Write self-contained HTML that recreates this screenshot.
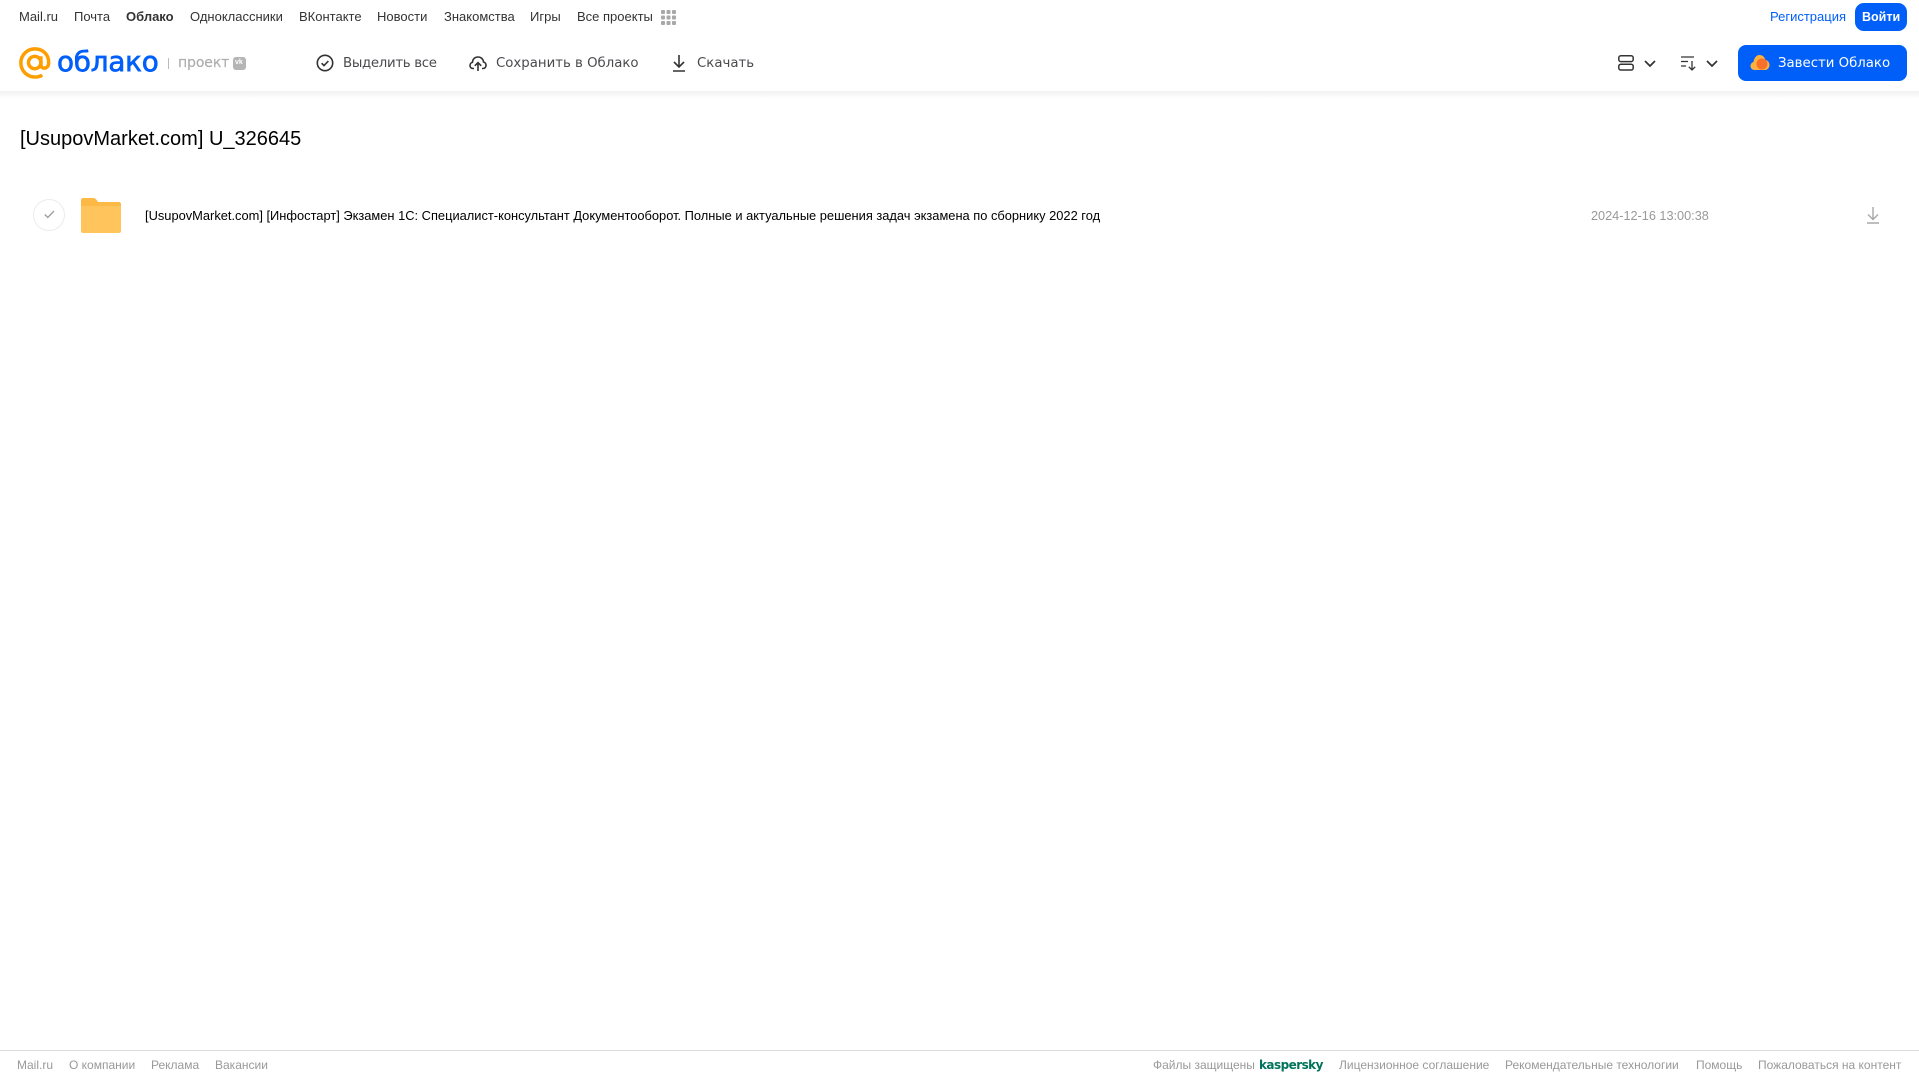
<!DOCTYPE html>
<html lang="ru"><head><meta charset="utf-8"><title>Облако</title>
<style>
html,body{margin:0;padding:0;background:#fff;width:1919px;height:1079px;overflow:hidden}
body{position:relative;font-family:"Liberation Sans",Arial,sans-serif}
.t{position:absolute;white-space:nowrap;line-height:20px}
.n{top:7px;font-size:13px;color:#333}
.b{top:54px;color:#4a4a4e;font-family:"DejaVu Sans",sans-serif;font-size:13.3px}
.f{top:1055px;font-size:12px;color:#999}
svg{position:absolute;overflow:visible}
#shadow{position:absolute;left:0;top:91px;width:1919px;height:8px;background:linear-gradient(#f2f2f3,#fff)}
</style></head><body>
<span class="t n" style="left:19px">Mail.ru</span>
<span class="t n" style="left:74px">Почта</span>
<span class="t n" style="left:126px;font-weight:bold">Облако</span>
<span class="t n" style="left:190px">Одноклассники</span>
<span class="t n" style="left:299px">ВКонтакте</span>
<span class="t n" style="left:377px">Новости</span>
<span class="t n" style="left:444px">Знакомства</span>
<span class="t n" style="left:530px">Игры</span>
<span class="t n" style="left:577px">Все проекты</span>
<svg style="left:661px;top:10px" width="15" height="15" fill="#a8a8a8"><rect width="4" height="4" rx="1"/><rect x="5.5" width="4" height="4" rx="1"/><rect x="11" width="4" height="4" rx="1"/><rect y="5.5" width="4" height="4" rx="1"/><rect x="5.5" y="5.5" width="4" height="4" rx="1"/><rect x="11" y="5.5" width="4" height="4" rx="1"/><rect y="11" width="4" height="4" rx="1"/><rect x="5.5" y="11" width="4" height="4" rx="1"/><rect x="11" y="11" width="4" height="4" rx="1"/></svg>

<span class="t n" style="left:1770px;color:#005ff9">Регистрация</span>
<div style="position:absolute;left:1855px;top:3px;width:52px;height:28px;background:#005ff9;border-radius:9px"></div>
<span class="t n" style="left:1862px;color:#fff;font-weight:bold;font-size:12.5px">Войти</span>

<svg style="left:19px;top:47px" width="32" height="32" viewBox="0 0 33 33" fill="none" stroke="#ff9e00" stroke-width="3.6"><circle cx="16.2" cy="16" r="6.4"/><path d="M22.6 9.6v8.6c0 5 7.6 5 8-1.4C31 7.6 24.5 1.9 16.4 1.9 8.3 1.9 1.9 8.4 1.9 16.4s6.4 14.6 14.5 14.6c3 0 5.5-.7 7.6-2"/></svg>
<span class="t" style="left:57px;top:44px;line-height:36px;font-size:27.8px;color:#005ff9;font-family:'DejaVu Sans',sans-serif;-webkit-text-stroke:.7px #005ff9;letter-spacing:-.2px">облако</span>
<div style="position:absolute;left:168px;top:58px;width:1px;height:11px;background:#bbb"></div>
<span class="t" style="left:178px;top:53px;font-size:14px;color:#aeaeae;font-family:'DejaVu Sans',sans-serif;-webkit-text-stroke:.2px #aeaeae;letter-spacing:-.1px">проект</span>
<div style="position:absolute;left:233px;top:57px;width:13px;height:13px;background:#b5b5b5;border-radius:3px"></div>
<span class="t" style="left:235px;top:53px;font-size:7px;font-weight:bold;color:#fff">vk</span>

<svg style="left:316px;top:54px" width="18" height="18" viewBox="0 0 18 18" fill="none" stroke="#333" stroke-width="1.6"><circle cx="9" cy="9" r="7.7"/><path d="M5.6 9.2l2.4 2.4 4.4-4.6"/></svg>
<span class="t b" style="left:343px;letter-spacing:-.3px">Выделить все</span>
<svg style="left:469px;top:54px" width="18" height="18" viewBox="0 0 18 18" fill="none" stroke="#333" stroke-width="1.6"><path d="M5 14.5H4C2 14.5 1 13 1 11.5 1 10 2 8.7 3.4 8.4 3.6 5 6 3 9 3c3 0 5.200 2 5.500 5 1.500.3 2.500 1.700 2.500 3.300 0 1.700-1.200 3.200-3 3.200h-1"/><path d="M9 17V9M5.800 11.800L9 8.600l3.200 3.200"/></svg>
<span class="t b" style="left:496px">Сохранить в Облако</span>
<svg style="left:672px;top:54px" width="14" height="18" viewBox="0 0 14 18" fill="none" stroke="#333" stroke-width="1.600"><path d="M7 1v11.500M2 8l5 5 5-5M1 17h12"/></svg>
<span class="t b" style="left:697px">Скачать</span>

<svg style="left:1618px;top:55px" width="16" height="16" viewBox="0 0 16 16" fill="none" stroke="#333" stroke-width="1.500"><rect x=".8" y=".8" width="14.400" height="5.800" rx="2"/><rect x=".8" y="9.200" width="14.400" height="5.800" rx="2"/></svg>
<svg style="left:1644px;top:60px" width="12" height="7" fill="none" stroke="#333" stroke-width="1.700"><path d="M1 1l5 5 5-5"/></svg>
<svg style="left:1681px;top:56px" width="16" height="15" viewBox="0 0 16 15" fill="none" stroke="#333" stroke-width="1.300"><path d="M0 1h13M0 5.500h7M0 10h5M11 5v9M7.800 10.800l3.200 3.200 3.200-3.200"/></svg>
<svg style="left:1706px;top:60px" width="12" height="7" fill="none" stroke="#333" stroke-width="1.700"><path d="M1 1l5 5 5-5"/></svg>
<div style="position:absolute;left:1738px;top:45px;width:169px;height:36px;background:#005ff9;border-radius:8px"></div>
<svg style="left:1750px;top:54px" width="20" height="17" viewBox="0 0 20 17"><path d="M4.500 16C2 16 .5 14 .5 12c0-2 1.200-3.500 3-4C4 4 6.500 1 9.500 1c3 0 5 2 6 5 2.500.5 4 2.500 4 5 0 2.800-2 5-4.500 5z" fill="#ffb13d"/><circle cx="12" cy="10" r="5.500" fill="#f9702a"/></svg>
<span class="t b" style="left:1778px;color:#fff">Завести Облако</span>
<div id="shadow"></div>

<span class="t" style="left:20px;top:126px;line-height:26px;font-size:20px;color:#000">[UsupovMarket.com] U_326645</span>

<div style="position:absolute;left:33px;top:199px;width:30px;height:30px;border:1px solid #ececec;border-radius:50%"></div>
<svg style="left:44px;top:210px" width="11" height="9" fill="none" stroke="#9a9a9a" stroke-width="1.300"><path d="M.8 4.500l3 3L10 1"/></svg>
<svg style="left:81px;top:198px" width="40" height="35" viewBox="0 0 40 35"><path d="M2 0h10c2 0 3 1 4 2.500L17 4h21c1 0 2 1 2 2v7H0V2C0 1 1 0 2 0z" fill="#fdb945"/><path d="M0 8h40v25c0 1-1 2-2 2H2c-1 0-2-1-2-2z" fill="#ffc55c"/></svg>
<span class="t" style="left:145px;top:206px;font-size:12.87px;color:#000">[UsupovMarket.com] [Инфостарт] Экзамен 1С: Специалист-консультант Документооборот. Полные и актуальные решения задач экзамена по сборнику 2022 год</span>
<span class="t" style="left:1591px;top:206px;font-size:12.7px;color:#999">2024-12-16 13:00:38</span>
<svg style="left:1866px;top:206px" width="14" height="18" viewBox="0 0 14 18" fill="none" stroke="#a8a8a8" stroke-width="1.400"><path d="M7 1v12M2 8.500l5 5 5-5M1 17h12"/></svg>

<div style="position:absolute;left:0;top:1050px;width:1919px;height:1px;background:#ddd"></div>
<span class="t f" style="left:17px">Mail.ru</span>
<span class="t f" style="left:69px">О компании</span>
<span class="t f" style="left:151px">Реклама</span>
<span class="t f" style="left:215px">Вакансии</span>
<span class="t f" style="left:1153px">Файлы защищены</span>
<span class="t f" style="left:1259px;color:#00735c;font-weight:bold;font-family:'DejaVu Sans',sans-serif;letter-spacing:-.55px">kaspersky</span>
<span class="t f" style="left:1339px">Лицензионное соглашение</span>
<span class="t f" style="left:1505px">Рекомендательные технологии</span>
<span class="t f" style="left:1696px">Помощь</span>
<span class="t f" style="left:1758px">Пожаловаться на контент</span>
</body></html>
